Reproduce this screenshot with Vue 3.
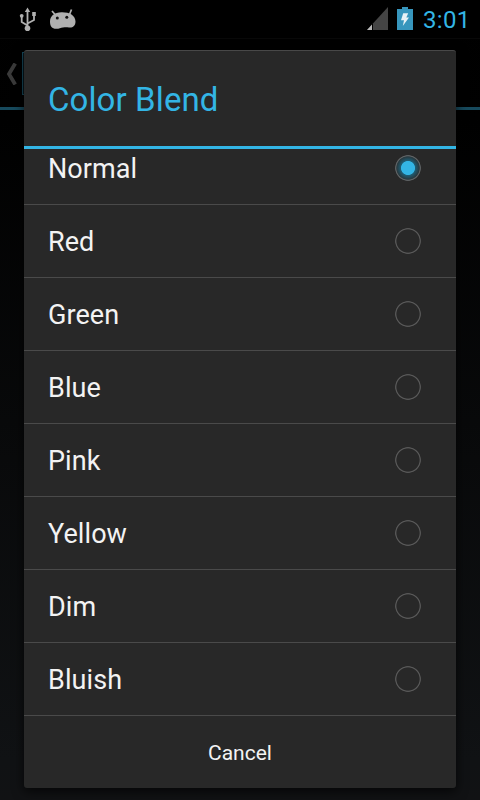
<script setup>
import { ref } from 'vue'
const options = ['Normal', 'Red', 'Green', 'Blue', 'Pink', 'Yellow', 'Dim', 'Bluish']
const selected = ref('Normal')
</script>

<template>
  <div class="screen">
    <header class="status">
      <svg class="usb" width="18" height="26" viewBox="0 0 18 26">
        <g fill="none" stroke="#b0b0b0" stroke-width="1.800">
          <path d="M8.500 4v17M8.500 18.500L2.700 15V9M8.500 16.500L15 13V7" />
        </g>
        <g fill="#b0b0b0">
          <path d="M8.500 .5L11.200 5H5.800z" />
          <circle cx="8.500" cy="21.300" r="2.800" />
          <circle cx="2.700" cy="8.800" r="1.900" />
          <path d="M13.200 5h3.600v4h-3.600z" />
        </g>
      </svg>
      <svg class="droid" width="28" height="22" viewBox="0 0 28 22">
        <path d="M3 2l3.500 4M22.500 .5l-2 5" stroke="#b0b0b0" stroke-width="1.700" fill="none" />
        <path fill="#b0b0b0" d="M1 12.500C1 7 5.500 3.300 12.500 3.200c7.500-.2 14 3 14 9.300 0 4.500-3 6.500-6.500 6-2.500-.3-4-.2-6 0-2.500.3-3.500 1.300-7 1.300C3 19.800 1 17.500 1 12.500z" />
        <circle cx="8.300" cy="9" r="1.500" fill="#111" />
        <circle cx="17.800" cy="8.300" r="1.500" fill="#111" />
      </svg>
      <span class="spacer"></span>
      <svg class="signal" width="22" height="24" viewBox="0 0 22 24">
        <path fill="#444" d="M21 0v23H0z" />
        <path fill="#b9b9b9" d="M5 17.500V23H0z" />
        <path fill="#000" d="M5 17h1v6H5z" />
      </svg>
      <svg class="battery" width="16" height="24" viewBox="0 0 16 24">
        <path fill="#3796bd" d="M5 0h6v2h5v21H0V2h5z" />
        <path fill="#e8f2f6" d="M6.200 6.300h5L9.300 10.500H12l-6.200 8.500 1.200-5.700H4z" />
      </svg>
      <time class="clock">3:01</time>
    </header>

    <div class="actionbar">
      <svg class="back" width="11" height="22" viewBox="0 0 11 22">
        <path d="M9.200 .5L3 11l6.200 10.500" fill="none" stroke="#3a3a3a" stroke-width="3.800" />
      </svg>
      <span class="appicon"></span>
    </div>

    <section class="dialog">
      <h1 class="title">Color Blend</h1>
      <ul class="list">
        <li v-for="o in options" :key="o" class="row" @click="selected = o">
          <span class="label">{{ o }}</span>
          <span class="radio" :class="{ on: o === selected }"></span>
        </li>
      </ul>
      <button class="cancel">Cancel</button>
    </section>
  </div>
</template>

<style>
body {
  background: #000;
}
</style>

<style scoped>
.screen {
  position: relative;
  width: 480px;
  height: 800px;
  overflow: hidden;
  background: linear-gradient(#000 0, #010101 120px, #101214 760px, #111214);
  font-family: Roboto, "Liberation Sans", sans-serif;
}
.status {
  display: flex;
  align-items: flex-start;
  box-sizing: border-box;
  height: 38px;
  padding: 7px 11px 0 19px;
  background: #000;
}
.droid {
  margin: 2px 0 0 12px;
}
.spacer {
  flex: 1;
}
.signal {
  margin-right: 8px;
}
.clock {
  margin: -1px 0 0 10px;
  width: 46px;
  font-size: 24px;
  line-height: 28px;
  letter-spacing: 0.3px;
  color: #33b5e5;
  white-space: nowrap;
}
.actionbar {
  display: flex;
  align-items: flex-start;
  box-sizing: border-box;
  height: 72px;
  padding: 13px 0 0 6px;
  border-top: 1px solid #080808;
  border-bottom: 3px solid #174a5d;
}
.back {
  margin-top: 11px;
}
.appicon {
  width: 44px;
  height: 43px;
  margin-left: 5px;
  box-sizing: border-box;
  border: 1px solid #174a5d;
  background: #07171e;
}
.dialog {
  position: absolute;
  left: 24px;
  top: 50px;
  width: 432px;
  height: 738px;
  box-sizing: border-box;
  display: flex;
  flex-direction: column;
  overflow: hidden;
  border-top: 1px solid #484848;
  border-radius: 3px;
  background: #282828;
  box-shadow: 0 3px 12px rgba(0, 0, 0, 0.75);
}
.title {
  flex: none;
  margin: 0;
  height: 95px;
  padding: 0 24px;
  border-bottom: 3px solid #33b5e5;
  font-size: 33px;
  font-weight: 400;
  line-height: 97px;
  letter-spacing: 0.1px;
  color: #33b5e5;
}
.list {
  flex: none;
  display: flex;
  flex-direction: column;
  justify-content: flex-end;
  height: 567px;
  margin: 0;
  padding: 0;
  overflow: hidden;
  list-style: none;
}
.row {
  flex: none;
  display: flex;
  align-items: center;
  justify-content: space-between;
  box-sizing: border-box;
  height: 73px;
  padding: 0 35px 0 24px;
  border-bottom: 1px solid #4a4a4a;
}
.label {
  padding-top: 2px;
  font-size: 27px;
  line-height: 32px;
  letter-spacing: 0.08px;
  color: #f3f3f3;
}
.radio {
  box-sizing: border-box;
  width: 26px;
  height: 26px;
  border-radius: 50%;
  background: radial-gradient(circle, transparent 11.200px, #575757 12px, #575757 12.600px, transparent 13.300px);
}
.radio.on {
  background: radial-gradient(circle, #33b5e5 6.600px, #1f5c72 7.400px, #28393f 11.300px, #5d6163 12px, #5d6163 12.600px, transparent 13.300px);
}
.cancel {
  flex: 1;
  padding: 2px 0 0;
  border: 0;
  background: none;
  font-family: inherit;
  font-size: 21px;
  color: #f3f3f3;
}
</style>
